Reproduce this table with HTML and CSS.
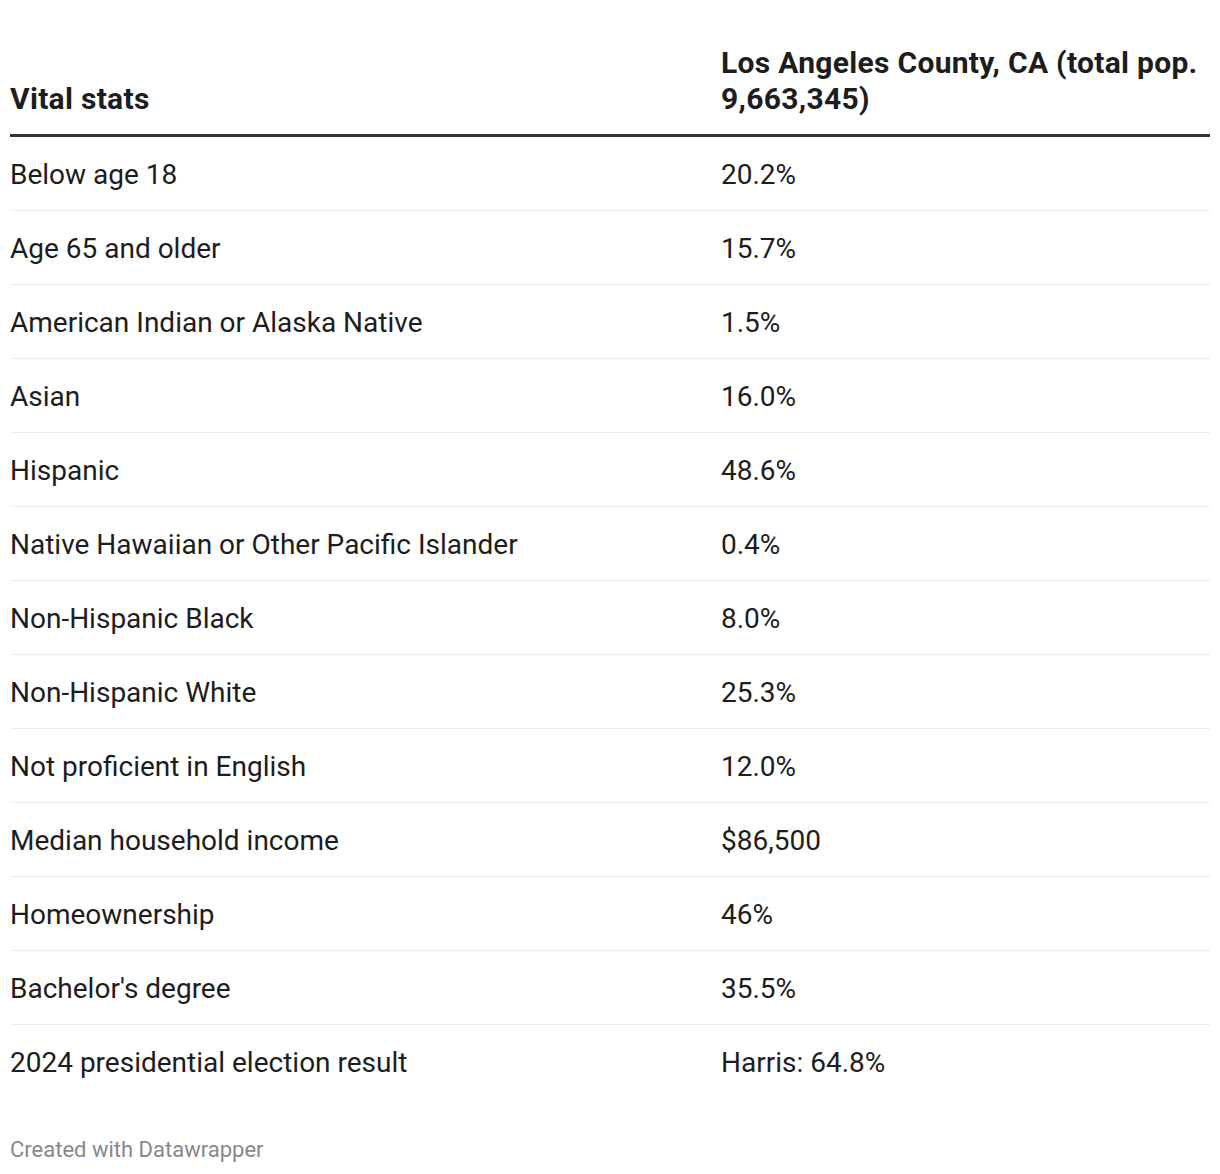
FILE: index.html
```html
<!DOCTYPE html>
<html>
<head>
<meta charset="utf-8">
<link rel="stylesheet" href="styles.css">
</head>
<body>
<div class="chart">
  <table class="stats">
    <thead>
      <tr>
        <th class="col-label">Vital stats</th>
        <th class="col-value">Los Angeles County, CA (total pop. 9,663,345)</th>
      </tr>
    </thead>
    <tbody>
      <tr><td class="col-label">Below age 18</td><td class="col-value">20.2%</td></tr>
      <tr><td class="col-label">Age 65 and older</td><td class="col-value">15.7%</td></tr>
      <tr><td class="col-label">American Indian or Alaska Native</td><td class="col-value">1.5%</td></tr>
      <tr><td class="col-label">Asian</td><td class="col-value">16.0%</td></tr>
      <tr><td class="col-label">Hispanic</td><td class="col-value">48.6%</td></tr>
      <tr><td class="col-label">Native Hawaiian or Other Pacific Islander</td><td class="col-value">0.4%</td></tr>
      <tr><td class="col-label">Non-Hispanic Black</td><td class="col-value">8.0%</td></tr>
      <tr><td class="col-label">Non-Hispanic White</td><td class="col-value">25.3%</td></tr>
      <tr><td class="col-label">Not proficient in English</td><td class="col-value">12.0%</td></tr>
      <tr><td class="col-label">Median household income</td><td class="col-value">$86,500</td></tr>
      <tr><td class="col-label">Homeownership</td><td class="col-value">46%</td></tr>
      <tr><td class="col-label">Bachelor's degree</td><td class="col-value">35.5%</td></tr>
      <tr><td class="col-label">2024 presidential election result</td><td class="col-value">Harris: 64.8%</td></tr>
    </tbody>
  </table>
  <div class="footer">Created with Datawrapper</div>
</div>
</body>
</html>
```

FILE: styles.css
```css
html, body {
  margin: 0;
  padding: 0;
  background: #ffffff;
}
body {
  font-family: Roboto, "Liberation Sans", Arial, sans-serif;
  color: #1d1d1d;
}
.chart {
  padding: 40px 10px 0 10px;
}
.stats {
  width: 1200px;
  border-collapse: collapse;
  table-layout: fixed;
}
.stats th {
  font-size: 30px;
  font-weight: 700;
  line-height: 36px;
  letter-spacing: 0.3px;
  text-align: left;
  vertical-align: bottom;
  padding: 5px 0 17px 0;
  border-bottom: 3px solid #333333;
}
.stats td {
  font-size: 28px;
  font-weight: 400;
  line-height: 30px;
  padding: 23px 0 20px 0;
  border-bottom: 1px solid #ececec;
}
.stats tbody tr:last-child td {
  border-bottom: none;
}
.col-label {
  width: 701px;
}
.stats .col-value {
  padding-left: 10px;
}
.footer {
  margin-top: 39px;
  font-size: 22px;
  line-height: 26px;
  color: #888888;
}
```
